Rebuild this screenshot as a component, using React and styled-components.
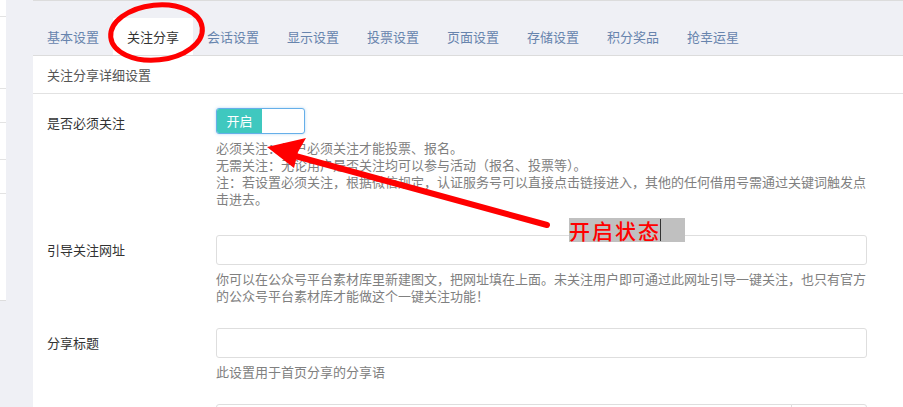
import React from 'react'
import styled, { createGlobalStyle } from 'styled-components'

const GlobalStyle = createGlobalStyle`
	html, body {
		margin: 0;
		padding: 0;
		background: #eff0f5;
		font-family: "Noto Sans CJK SC", "Liberation Sans", sans-serif;
		font-size: 13px;
		color: #333;
	}
`

const Page = styled.div`
	position: relative;
	display: flex;
	align-items: flex-start;
	width: 903px;
	height: 407px;
	overflow: hidden;
	background: #eff0f5;
`

const SideMenu = styled.ul`
	flex: 0 0 6px;
	margin: 0 27px 0 0;
	padding: 0;
	list-style: none;
	background: #fff;
	border-bottom: 1px solid #ddd;
`

const SideItem = styled.li`
	height: ${(p) => p.$h}px;
	border-bottom: 1px solid #e3e3e3;
	&:last-child {
		border-bottom: 0;
	}
`

const Main = styled.div`
	flex: 1;
	min-width: 0;
`

const TabBar = styled.div`
	display: flex;
	align-items: flex-end;
	height: 54px;
	border-top: 1px solid #dcdcdc;
	border-bottom: 1px solid #dcdcdc;
	background: #eff0f5;
`

const Tab = styled.div`
	width: 80px;
	height: 37px;
	line-height: 37px;
	text-align: center;
	font-size: 13px;
	color: ${(p) => (p.$active ? '#333' : '#6784ad')};
	background: ${(p) => (p.$active ? '#fff' : 'transparent')};
`

const Panel = styled.div`
	background: #fff;
	height: 360px;
`

const PanelHead = styled.div`
	height: 37px;
	line-height: 37px;
	padding-left: 14px;
	color: #555;
	border-bottom: 1px solid #e2e2e2;
`

const Form = styled.div`
	display: grid;
	grid-template-columns: 169px 1fr;
	row-gap: 24px;
	padding: 14px 36px 0 14px;
`

const Label = styled.div`
	line-height: 30px;
	color: #333;
`

const Field = styled.div`
	display: flex;
	flex-direction: column;
	align-items: flex-start;
`

const Switch = styled.div`
	display: flex;
	width: 87px;
	height: 24px;
	border: 1px solid #66afe9;
	border-radius: 3px;
	box-shadow: 0 0 3px rgba(102, 175, 233, 0.5);
	overflow: hidden;
	background: #fff;
`

const SwitchOn = styled.span`
	width: 45px;
	line-height: 24px;
	text-align: center;
	color: #fff;
	background: #3fc8bf;
`

const Input = styled.div`
	box-sizing: border-box;
	width: 100%;
	height: 30px;
	border: 1px solid #dedede;
	border-radius: 3px;
	background: #fff;
`

const InputGroup = styled.div`
	display: flex;
	width: 100%;
`

const GroupInput = styled(Input)`
	flex: 1;
	border-radius: 3px 0 0 3px;
`

const Addon = styled(Input)`
	width: 76px;
	border-left: 1px solid #dedede;
	margin-left: -1px;
	border-radius: 0 3px 3px 0;
`

const Help = styled.div`
	margin-top: 5px;
	margin-bottom: ${(p) => p.$after || 0}px;
	line-height: 17px;
	color: #808080;
`

const Overlay = styled.svg`
	position: absolute;
	left: 0;
	top: 0;
	pointer-events: none;
`

const Note = styled.div`
	position: absolute;
	left: 569px;
	top: 218px;
	display: flex;
	align-items: center;
	width: 116px;
	height: 24px;
	background: #c0c0c0;
	color: #ff0000;
	font-family: "Noto Sans CJK SC", serif;
	font-size: 21px;
	font-weight: 500;
	letter-spacing: 2px;
	line-height: 24px;
`

const Caret = styled.span`
	width: 1px;
	height: 22px;
	margin-left: -1px;
	background: #333;
`

const tabs = ['基本设置', '关注分享', '会话设置', '显示设置', '投票设置', '页面设置', '存储设置', '积分奖品', '抢幸运星']

const App = () => {
	return (
		<Page>
			<GlobalStyle />
			<SideMenu>
				{[16, 71, 33, 36, 33, 106].map((h, i) => (
					<SideItem key={i} $h={h} />
				))}
			</SideMenu>
			<Main>
				<TabBar>
					{tabs.map((t) => (
						<Tab key={t} $active={t === '关注分享'}>
							{t}
						</Tab>
					))}
				</TabBar>
				<Panel>
					<PanelHead>关注分享详细设置</PanelHead>
					<Form>
						<Label>是否必须关注</Label>
						<Field>
							<Switch>
								<SwitchOn>开启</SwitchOn>
							</Switch>
							<Help $after={4}>
								必须关注：用户必须关注才能投票、报名。
								<br />
								无需关注：无论用户是否关注均可以参与活动（报名、投票等）。
								<br />
								注：若设置必须关注，根据微信规定，认证服务号可以直接点击链接进入，其他的任何借用号需通过关键词触发点击进去。
							</Help>
						</Field>

						<Label>引导关注网址</Label>
						<Field>
							<Input />
							<Help>
								你可以在公众号平台素材库里新建图文，把网址填在上面。未关注用户即可通过此网址引导一键关注，也只有官方的公众号平台素材库才能做这个一键关注功能！
							</Help>
						</Field>

						<Label>分享标题</Label>
						<Field>
							<Input />
							<Help>此设置用于首页分享的分享语</Help>
						</Field>

						<Label />
						<Field>
							<InputGroup>
								<GroupInput />
								<Addon />
							</InputGroup>
						</Field>
					</Form>
				</Panel>
			</Main>

			{/* annotation marks drawn over the page */}
			<Overlay width="903" height="407" viewBox="0 0 903 407">
				<ellipse
					cx="156.5"
					cy="32.5"
					rx="46"
					ry="27.5"
					fill="none"
					stroke="#ff0000"
					strokeWidth="5"
					transform="rotate(-6 156.5 32.5)"
				/>
				<line x1="288" y1="154" x2="547" y2="225" stroke="#ff0000" strokeWidth="6" strokeLinecap="round" />
				<polygon points="267,147 306,138 298,152 294,168" fill="#ff0000" />
			</Overlay>
			<Note>
				开启状态
				<Caret />
			</Note>
		</Page>
	)
}

export default App
